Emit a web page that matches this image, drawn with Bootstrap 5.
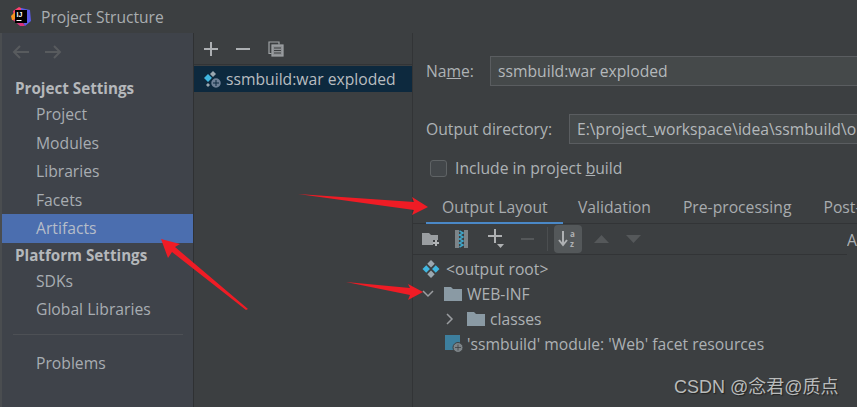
<!DOCTYPE html>
<html><head><meta charset="utf-8"><title>Project Structure</title>
<link href="https://cdn.jsdelivr.net/npm/bootstrap@5.3.0/dist/css/bootstrap.min.css" rel="stylesheet">
<style>
html,body{margin:0;width:857px;height:407px;overflow:hidden;background:#3c3f41}
body{font-family:"Open Sans","Noto Sans",sans-serif;font-size:15.7px;color:#adb2b5;line-height:20px;position:relative}
.app{width:857px;height:407px}
.titlebar{height:33px;background:#3c3f41;padding-left:11px;gap:10px;color:#a9adb0;font-size:15.6px}
.edge{width:2px;background:#4a4d50}
.side{width:192px;background:#3f434a;border-right:1px solid #2f3133;flex:none}
.navarrows{height:43px;padding:12px 0 0 10px;gap:16px}
.sect{font-weight:700;padding-left:13px;color:#b5b8bb;height:24px;line-height:24px;font-size:15.2px}
.itm{padding-left:34px;height:28.5px;line-height:28.5px;color:#a8adb2}
.itm.on{background:#4b6eaf;color:#b6bdc9}
.sep{height:1px;background:#4d5055;margin:10.500px 10px 13.500px 11px}
.mid{width:219px;flex:none;border-right:1px solid #323436}
.midtool{height:32px;padding:0 0 0 10px;gap:18px;border-bottom:1px solid #323436}
.artrow{height:26px;background:#0d293e;padding-left:9px;gap:4px;color:#b9bdc0;margin-top:1px}
.main{flex:1;min-width:0;overflow:hidden;background:#3c3f41}
.frow{padding-left:13px;height:30px}
.fbox{height:30px;background:#45494a;border:1px solid #5a5d60;padding-left:7px;line-height:28px;color:#b4b8bb;white-space:nowrap;overflow:hidden;flex:1;margin-right:-2px}
.chk{width:17px;height:17px;border:1px solid #5f6365;border-radius:3px;background:#43474a;flex:none}
.tabsrow{height:33px;border-bottom:1px solid #323436;white-space:nowrap;margin-top:11px}
.tabx{padding:0 16px;height:33px;line-height:32px;color:#a8acaf;flex:none}
.tabx.on{border-bottom:2px solid #4a88c7;margin-left:13px;width:137px;margin-right:-1px}
.toolwrap{height:31px}
.tools{flex:1;height:31px;border-bottom:1px solid #323436;padding-left:9px}
.cutA{width:10px;overflow:hidden;flex:none;white-space:nowrap}
.sortbtn{width:28px;height:28px;background:#54585a;border-radius:4px;margin-left:6px}
.tree{padding-top:1px}
.trow{height:25px;white-space:nowrap;color:#adb1b4}
.overlay{position:absolute;left:0;top:0;pointer-events:none}
.wmark{position:absolute;left:674px;top:376px;font-family:"Liberation Sans","Noto Sans CJK SC",sans-serif;font-size:18px;color:#b9bbbb;line-height:22px;white-space:nowrap;text-shadow:1px 1px 1px #222}
</style></head>
<body>
<div class="app d-flex flex-column">
 <div class="titlebar d-flex align-items-center">
  <svg width="20" height="20" viewBox="0 0 20 20"><path d="M2 4 8 0 12 2 3 10Z" fill="#fc3f6d"/><path d="M10 1 19 3 20 14 14 19 10 12Z" fill="#5a5be8"/><path d="M0 9 5 4 6 14 1 13Z" fill="#f7931e"/><path d="M2 13 9 19 14 19 8 10Z" fill="#d8327a"/><rect x="4" y="3" width="12" height="13" fill="#000"/><text x="5.500" y="10" font-size="7" font-weight="700" fill="#fff" font-family="Liberation Sans">IJ</text><rect x="5.500" y="13" width="5" height="1" fill="#fff"/></svg>
  <span>Project Structure</span>
 </div>
 <div class="d-flex flex-grow-1" style="min-height:0">
  <div class="edge"></div>
  <div class="side">
   <div class="navarrows d-flex">
    <svg width="17" height="14" viewBox="0 0 17 14" fill="none" stroke="#585b5e" stroke-width="2"><path d="M17 7H2M8 1 2 7l6 6"/></svg>
    <svg width="17" height="14" viewBox="0 0 17 14" fill="none" stroke="#585b5e" stroke-width="2"><path d="M0 7h15M9 1l6 6-6 6"/></svg>
   </div>
   <div class="sect">Project Settings</div>
   <div class="itm">Project</div>
   <div class="itm">Modules</div>
   <div class="itm">Libraries</div>
   <div class="itm">Facets</div>
   <div class="itm on">Artifacts</div>
   <div class="sect">Platform Settings</div>
   <div class="itm">SDKs</div>
   <div class="itm">Global Libraries</div>
   <div class="sep"></div>
   <div class="itm">Problems</div>
  </div>
  <div class="mid">
   <div class="midtool d-flex align-items-center">
    <svg width="14" height="14" viewBox="0 0 14 14" fill="#adb0b3"><rect x="0" y="6" width="14" height="2"/><rect x="6" y="0" width="2" height="14"/></svg>
    <svg width="14" height="14" viewBox="0 0 14 14" fill="#adb0b3"><rect x="0" y="6" width="14" height="2"/></svg>
    <svg width="16" height="16" viewBox="0 0 16 16" fill="none" stroke="#a0a3a6" stroke-width="1.200"><path d="M3.500 12.500H1V1h10v2.500"/><rect x="4" y="4" width="11" height="11" fill="#8d9093"/><path d="M6 7h7M6 9.500h7M6 12h7" stroke="#3c3f41"/></svg>
   </div>
   <div class="artrow d-flex align-items-center">
    <svg width="19" height="19" viewBox="0 0 19 19"><path d="M5 4 9 8 5 12 1 8Z" fill="#40b6e0"/><path d="M10 1 13 4 10 7 7 4Z" fill="#9aa7b0"/><path d="M5 13 7 15 5 17 3 15Z" fill="#9aa7b0"/><circle cx="13" cy="13" r="5.500" fill="#6e8096" stroke="#0d293e" stroke-width="1.500"/><path d="M10 13h6M13 10v6" stroke="#0d293e"/></svg>
    <span>ssmbuild:war exploded</span>
   </div>
  </div>
  <div class="main">
   <div class="frow d-flex align-items-center" style="margin-top:23px">
    <span style="width:64px;flex:none">Na<u>m</u>e:</span>
    <div class="fbox">ssmbuild:war exploded</div>
   </div>
   <div class="frow d-flex align-items-center" style="margin-top:28px">
    <span style="width:143px;flex:none">Output directory:</span>
    <div class="fbox">E:\project_workspace\idea\ssmbuild\out\artifacts</div>
   </div>
   <div class="d-flex align-items-center" style="padding-left:17px;margin-top:12px;height:24px;gap:8px">
    <div class="chk"></div><span>Include in project <u>b</u>uild</span>
   </div>
   <div class="tabsrow d-flex">
    <div class="tabx on">Output Layout</div>
    <div class="tabx">Validation</div>
    <div class="tabx">Pre-processing</div>
    <div class="tabx">Post-processing</div>
   </div>
   <div class="toolwrap d-flex">
   <div class="tools d-flex align-items-center">
    <svg width="18" height="15" viewBox="0 0 18 15"><path d="M0 1h7l2 2h7v5h-5v5H0Z" fill="#9a9ea1"/><path d="M14 8v6M11 11h6" stroke="#b0b3b5" stroke-width="2"/></svg>
    <svg width="13" height="18" viewBox="0 0 13 18" style="margin-left:15px"><rect width="13" height="18" fill="#7d8488"/><rect x="4" width="5" height="18" fill="#3a3d3f"/><path d="M4.500 1 8 3 4.500 5 8 7 4.500 9 8 11 4.500 13 8 15 4.500 17" fill="none" stroke="#40a5c8" stroke-width="1.500"/></svg>
    <svg width="20" height="20" viewBox="0 0 20 20" style="margin-left:20px"><path d="M0 7h14M7 0v14" stroke="#afb1b3" stroke-width="2"/><path d="M9 15h7l-3.500 4Z" fill="#afb1b3"/></svg>
    <svg width="13" height="2" viewBox="0 0 13 2" style="margin-left:13px"><rect width="13" height="2" fill="#55585a"/></svg>
    <div style="width:1px;height:24px;background:#4b4e50;margin-left:13px"></div>
    <div class="sortbtn d-flex align-items-center justify-content-center">
     <svg width="20" height="18" viewBox="0 0 20 18"><path d="M5 1v13M1 10l4 5 4-5" fill="none" stroke="#afb1b3" stroke-width="2"/><text x="12" y="7" font-size="8" font-weight="700" fill="#afb1b3" font-family="Open Sans">a</text><text x="12" y="17" font-size="8" font-weight="700" fill="#afb1b3" font-family="Open Sans">z</text></svg>
    </div>
    <svg width="15" height="8" viewBox="0 0 15 8" style="margin-left:12px"><path d="M0 8 7.500 0 15 8Z" fill="#55585a"/></svg>
    <svg width="15" height="8" viewBox="0 0 15 8" style="margin-left:17px"><path d="M0 0 7.500 8 15 0Z" fill="#55585a"/></svg>
   </div>
   <div class="cutA d-flex align-items-center">A</div>
   </div>
   <div class="tree">
    <div class="trow d-flex align-items-center" style="padding-left:9px;gap:6px">
     <svg width="18" height="18" viewBox="0 0 17 17"><path d="M4 5 7.500 8.500 4 12 .5 8.500Z" fill="#40b6e0"/><path d="M13 5 16.500 8.500 13 12 9.500 8.500Z" fill="#40b6e0"/><path d="M8.500 0 12 3.500 8.500 7 5 3.500Z" fill="#9aa7b0"/><path d="M8.500 10 12 13.500 8.500 17 5 13.500Z" fill="#9aa7b0"/></svg>
     <span>&lt;output root&gt;</span>
    </div>
    <div class="trow d-flex align-items-center" style="padding-left:9px">
     <svg width="12" height="8" viewBox="0 0 12 8" fill="none" stroke="#9a9da0" stroke-width="1.500"><path d="M1 1l5 5 5-5"/></svg>
     <svg width="18" height="14" viewBox="0 0 18 14" style="margin-left:10px"><path d="M0 0h7l2 2h9v12H0Z" fill="#8a9aa4"/></svg>
     <span style="margin-left:5px">WEB-INF</span>
    </div>
    <div class="trow d-flex align-items-center" style="padding-left:33px">
     <svg width="8" height="12" viewBox="0 0 8 12" fill="none" stroke="#9a9da0" stroke-width="1.500"><path d="M1 1l5 5-5 5"/></svg>
     <svg width="18" height="14" viewBox="0 0 18 14" style="margin-left:13px"><path d="M0 0h7l2 2h9v12H0Z" fill="#8a9aa4"/></svg>
     <span style="margin-left:5px">classes</span>
    </div>
    <div class="trow d-flex align-items-center" style="padding-left:32px">
     <svg width="19" height="18" viewBox="0 0 19 18"><rect width="15" height="15" fill="#3d7f9e"/><circle cx="13" cy="12.500" r="5" fill="#7d8488" stroke="#3c3f41"/><path d="M10 12.500h6M13 9.500v6" stroke="#3c3f41" stroke-width=".8"/></svg>
     <span style="margin-left:3px">'ssmbuild' module: 'Web' facet resources</span>
    </div>
   </div>
  </div>
 </div>
</div>
<svg class="overlay" width="857" height="407" viewBox="0 0 857 407">
 <path d="M298 194 414 202 412 197 428 207 412 215 414 210Z" fill="#ef1c25"/>
 <path d="M346 282 410 288 408 284 423 292 408 300 410 295Z" fill="#ef1c25"/>
 <path d="M161 239 180 244 175 247 248 309 246 310 172 252 168 258Z" fill="#ef1c25"/>
</svg>
<div class="wmark">CSDN @念君@质点</div>
</body></html>
